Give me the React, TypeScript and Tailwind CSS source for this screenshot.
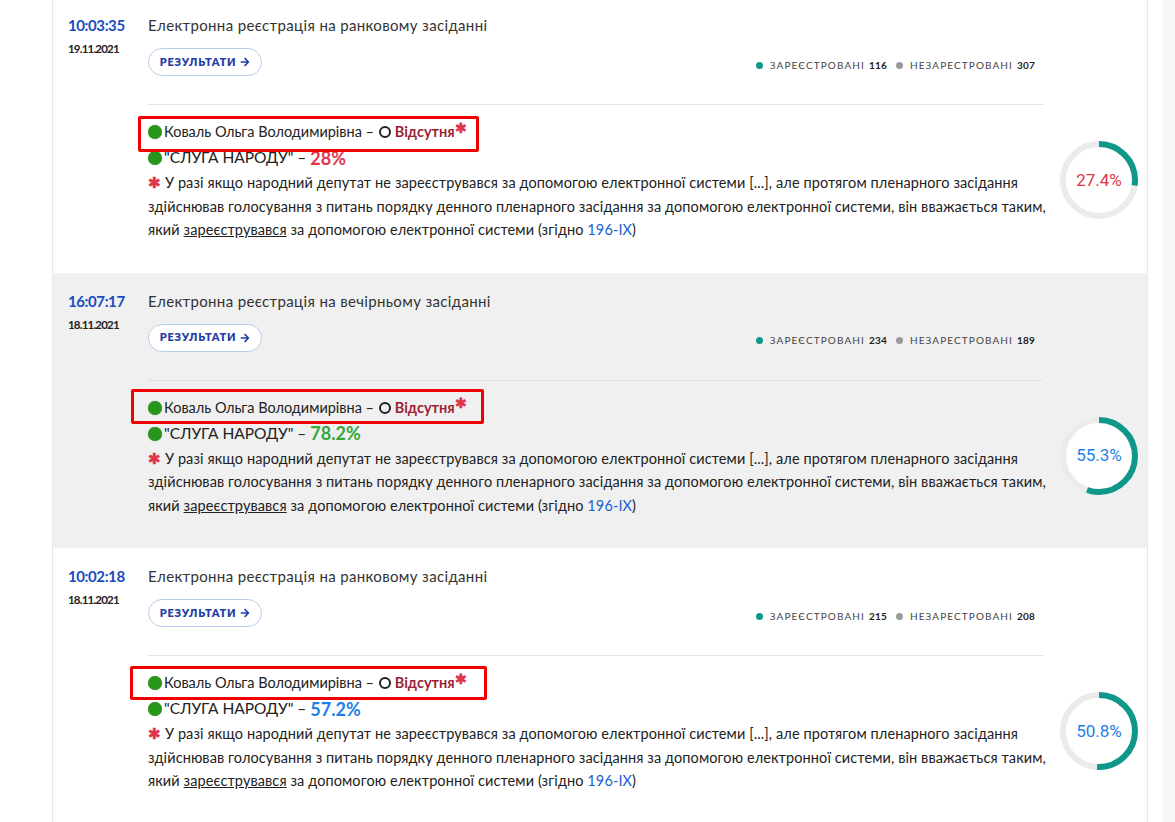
import React from "react";
import { FaArrowRight } from "react-icons/fa";

type Entry = {
  time: string;
  date: string;
  title: string;
  registered: number;
  unregistered: number;
  faction: string;
  factionColor: string;
  presence: number;
  presenceColor: string;
  shade: boolean;
  mark: { left: number; top: number; width: number; height: number };
};

const entries: Entry[] = [
  {
    time: "10:03:35",
    date: "19.11.2021",
    title: "Електронна реєстрація на ранковому засіданні",
    registered: 116,
    unregistered: 307,
    faction: "28%",
    factionColor: "text-[#e0364c]",
    presence: 27.4,
    presenceColor: "#e0364c",
    shade: false,
    mark: { left: -10, top: -16, width: 341, height: 36 },
  },
  {
    time: "16:07:17",
    date: "18.11.2021",
    title: "Електронна реєстрація на вечірньому засіданні",
    registered: 234,
    unregistered: 189,
    faction: "78.2%",
    factionColor: "text-[#35a83a]",
    presence: 55.3,
    presenceColor: "#1e7fe6",
    shade: true,
    mark: { left: -17, top: -19, width: 353, height: 35 },
  },
  {
    time: "10:02:18",
    date: "18.11.2021",
    title: "Електронна реєстрація на ранковому засіданні",
    registered: 215,
    unregistered: 208,
    faction: "57.2%",
    factionColor: "text-[#1e7fe6]",
    presence: 50.8,
    presenceColor: "#1e7fe6",
    shade: false,
    mark: { left: -18, top: -17, width: 357, height: 34 },
  },
];

function Donut({ value, color }: { value: number; color: string }) {
  const r = 36;
  const c = 2 * Math.PI * r;
  return (
    <div className="relative w-[78px] h-[78px] shrink-0">
      <svg width="78" height="78" viewBox="0 0 78 78" className="absolute inset-0">
        <circle cx="39" cy="39" r={r} fill="#ffffff" stroke="#ebebeb" strokeWidth="6" />
        <circle
          cx="39"
          cy="39"
          r={r}
          fill="none"
          stroke="#0f978a"
          strokeWidth="6"
          strokeDasharray={`${(c * value) / 100} ${c}`}
          transform="rotate(-90 39 39)"
        />
      </svg>
      <div
        className="absolute inset-0 flex items-center justify-center text-[17px] font-['Roboto',sans-serif]"
        style={{ color }}
      >
        {value}%
      </div>
    </div>
  );
}

function Section({ e }: { e: Entry }) {
  return (
    <div className={`flex pl-[15px] pr-[9px] pt-[18px] pb-[31px] ${e.shade ? "bg-[#f0f0f0]" : "bg-white"}`}>
      <div className="w-[80px] shrink-0">
        <div className="h-[20px] leading-[20px] text-[15px] font-bold text-[#1a4cc0] tracking-[-0.4px] font-['Lato',sans-serif]">
          {e.time}
        </div>
        <div className="mt-[5px] text-[11.5px] font-bold text-[#222] tracking-[-0.8px] font-['Lato',sans-serif]">
          {e.date}
        </div>
      </div>
      <div className="flex-1">
        <div className="h-[20px] leading-[20px] text-[15px] text-[#333] tracking-[0.35px] font-['Lato',sans-serif]">
          {e.title}
        </div>
        <div className="flex items-center justify-between mt-[13px] w-[895px] pr-[8px]">
          <button className="h-[28px] w-[114px] rounded-full border border-[#b9cbec] bg-white flex items-center justify-center gap-[4px] text-[11px] font-extrabold tracking-[0.8px] text-[#1f3ea6] font-['Lato',sans-serif]">
            РЕЗУЛЬТАТИ
            <FaArrowRight className="w-[10px] h-[10px]" />
          </button>
          <div className="flex items-center mt-[6px] text-[10px] tracking-[1.1px] text-[#444] font-['Lato',sans-serif]">
            <span className="w-[7px] h-[7px] rounded-full bg-[#0f978a] mr-[7px]" />
            ЗАРЕЄСТРОВАНІ <b className="ml-[4px] text-[#222] tracking-[0.2px]">{e.registered}</b>
            <span className="w-[7px] h-[7px] rounded-full bg-[#9b9b9b] ml-[9px] mr-[7px]" />
            НЕЗАРЕСТРОВАНІ <b className="ml-[4px] text-[#222] tracking-[0.2px]">{e.unregistered}</b>
          </div>
        </div>
        <div className="w-[895px] h-px bg-[#e2e2e2] mt-[28px]" />
        <div className="flex items-center gap-[17px] mt-[14px]">
          <div className="w-[895px] font-['Lato',sans-serif] text-[#222]">
            <div className="relative h-[26px] flex items-center text-[14.5px]">
              <div
                className="absolute border-[3px] border-[#f00000] rounded-[2px]"
                style={{ left: e.mark.left, top: 13 + e.mark.top, width: e.mark.width, height: e.mark.height }}
              />
              <span className="w-[14px] h-[14px] rounded-full bg-[#27961b] shadow-[0_0_1px_rgba(0,0,0,0.4)] mr-[2px]" />
              <span>Коваль Ольга Володимирівна –&nbsp;</span>
              <span className="w-[12px] h-[12px] rounded-full border-2 border-[#222] mr-[4px] ml-[1px]" />
              <span className="font-bold text-[#9a1f35]">Відсутня</span>
              <span className="text-[#e0364c] font-bold text-[14px] -mt-[10px]">✱</span>
            </div>
            <div className="h-[26px] flex items-center text-[15.5px]">
              <span className="w-[14px] h-[14px] rounded-full bg-[#27961b] shadow-[0_0_1px_rgba(0,0,0,0.4)] mr-[2px]" />
              <span>"СЛУГА НАРОДУ" –&nbsp;</span>
              <span className={`font-bold text-[18px] ${e.factionColor}`}>{e.faction}</span>
            </div>
            <p className="text-[14.5px] leading-[23.5px] tracking-[0.1px] text-[#222] whitespace-nowrap">
              <span className="text-[#e0364c] font-bold">✱</span> У разі якщо народний депутат не зареєструвався за допомогою електронної системи [...], але протягом пленарного засідання
              <br />
              здійснював голосування з питань порядку денного пленарного засідання за допомогою електронної системи, він вважається таким,
              <br />
              який <span className="underline">зареєструвався</span> за допомогою електронної системи (згідно{" "}
              <span className="text-[#1a5fd0]">196-IX</span>)
            </p>
          </div>
          <Donut value={e.presence} color={e.presenceColor} />
        </div>
      </div>
    </div>
  );
}

export default function App() {
  return (
    <div className="w-[1175px] h-[822px] overflow-hidden flex bg-white">
      <div className="w-[52px] shrink-0 bg-white" />
      <div className="w-[1096px] shrink-0 border-l border-r border-[#e9e9e9]">
        <div className="-mt-[3px]">
          {entries.map((e) => (
            <Section key={e.time + e.date} e={e} />
          ))}
        </div>
      </div>
      <div className="w-[15px] shrink-0 bg-white" />
      <div className="flex-1 bg-[#f7f7f7]" />
    </div>
  );
}
